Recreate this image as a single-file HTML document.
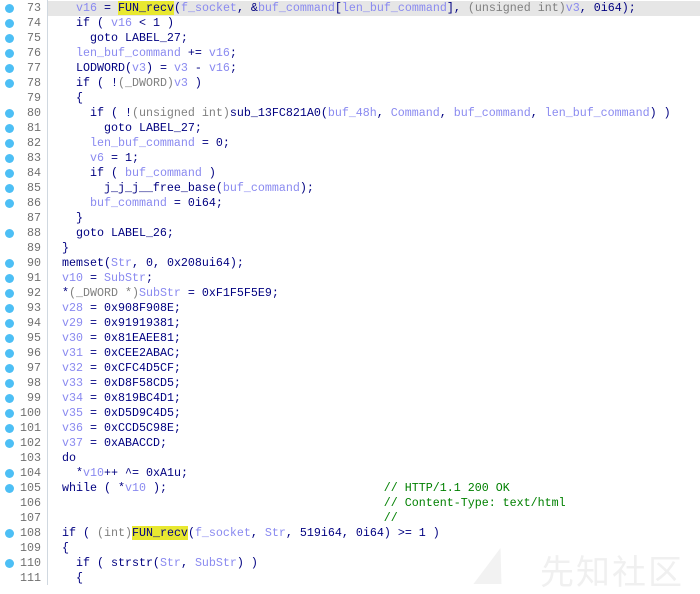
<!DOCTYPE html>
<html><head><meta charset="utf-8"><style>
body{margin:0;width:700px;height:585px;background:#fff;overflow:hidden;position:relative;font-family:"Liberation Mono",monospace;font-size:11.67px;}
.r{position:absolute;left:0;width:700px;height:15px;line-height:15px;white-space:pre;}
.d{position:absolute;left:5px;top:3px;width:9px;height:9px;border-radius:50%;background:#4dbff5;}
.n{position:absolute;left:14px;width:27px;text-align:right;color:#707070;}
.c{position:absolute;left:62px;color:#000080;}
.hl{background:#e6e6e6;}
.v{color:#8a8af0}.g{color:#808080}.k{color:#000080}.cm{color:#008000}
.y{background:#e8e830}
#sep{position:absolute;left:47px;top:0;width:1px;height:585px;background:#d0d8e0;}
#wm{position:absolute;left:540px;top:545px;font-family:"Noto Sans CJK SC",sans-serif;font-size:34px;color:#f0f0f0;letter-spacing:2px;}
#wm2{position:absolute;left:480px;top:548px;width:0;height:0;border-left:14px solid transparent;border-right:14px solid transparent;border-bottom:36px solid #f2f2f2;transform:skewX(-20deg);}
</style></head><body>
<div id="wm2"></div><div id="wm">先知社区</div>
<div id="sep"></div>
<div class="r hl" style="top:1px;left:48px;width:652px"></div>
<div class="r" style="top:1px"><span class="d"></span><span class="n">73</span><span class="c">  <span class="v">v16</span> = <span class="y">FUN_recv</span>(<span class="v">f_socket</span>, &amp;<span class="v">buf_command</span>[<span class="v">len_buf_command</span>], <span class="g">(unsigned int)</span><span class="v">v3</span>, 0i64);</span></div>
<div class="r" style="top:16px"><span class="d"></span><span class="n">74</span><span class="c">  if ( <span class="v">v16</span> &lt; 1 )</span></div>
<div class="r" style="top:31px"><span class="d"></span><span class="n">75</span><span class="c">    goto LABEL_27;</span></div>
<div class="r" style="top:46px"><span class="d"></span><span class="n">76</span><span class="c">  <span class="v">len_buf_command</span> += <span class="v">v16</span>;</span></div>
<div class="r" style="top:61px"><span class="d"></span><span class="n">77</span><span class="c">  LODWORD(<span class="v">v3</span>) = <span class="v">v3</span> - <span class="v">v16</span>;</span></div>
<div class="r" style="top:76px"><span class="d"></span><span class="n">78</span><span class="c">  if ( !<span class="g">(_DWORD)</span><span class="v">v3</span> )</span></div>
<div class="r" style="top:91px"><span class="n">79</span><span class="c">  {</span></div>
<div class="r" style="top:106px"><span class="d"></span><span class="n">80</span><span class="c">    if ( !<span class="g">(unsigned int)</span>sub_13FC821A0(<span class="v">buf_48h</span>, <span class="v">Command</span>, <span class="v">buf_command</span>, <span class="v">len_buf_command</span>) )</span></div>
<div class="r" style="top:121px"><span class="d"></span><span class="n">81</span><span class="c">      goto LABEL_27;</span></div>
<div class="r" style="top:136px"><span class="d"></span><span class="n">82</span><span class="c">    <span class="v">len_buf_command</span> = 0;</span></div>
<div class="r" style="top:151px"><span class="d"></span><span class="n">83</span><span class="c">    <span class="v">v6</span> = 1;</span></div>
<div class="r" style="top:166px"><span class="d"></span><span class="n">84</span><span class="c">    if ( <span class="v">buf_command</span> )</span></div>
<div class="r" style="top:181px"><span class="d"></span><span class="n">85</span><span class="c">      j_j_j__free_base(<span class="v">buf_command</span>);</span></div>
<div class="r" style="top:196px"><span class="d"></span><span class="n">86</span><span class="c">    <span class="v">buf_command</span> = 0i64;</span></div>
<div class="r" style="top:211px"><span class="n">87</span><span class="c">  }</span></div>
<div class="r" style="top:226px"><span class="d"></span><span class="n">88</span><span class="c">  goto LABEL_26;</span></div>
<div class="r" style="top:241px"><span class="n">89</span><span class="c">}</span></div>
<div class="r" style="top:256px"><span class="d"></span><span class="n">90</span><span class="c">memset(<span class="v">Str</span>, 0, 0x208ui64);</span></div>
<div class="r" style="top:271px"><span class="d"></span><span class="n">91</span><span class="c"><span class="v">v10</span> = <span class="v">SubStr</span>;</span></div>
<div class="r" style="top:286px"><span class="d"></span><span class="n">92</span><span class="c">*<span class="g">(_DWORD *)</span><span class="v">SubStr</span> = 0xF1F5F5E9;</span></div>
<div class="r" style="top:301px"><span class="d"></span><span class="n">93</span><span class="c"><span class="v">v28</span> = 0x908F908E;</span></div>
<div class="r" style="top:316px"><span class="d"></span><span class="n">94</span><span class="c"><span class="v">v29</span> = 0x91919381;</span></div>
<div class="r" style="top:331px"><span class="d"></span><span class="n">95</span><span class="c"><span class="v">v30</span> = 0x81EAEE81;</span></div>
<div class="r" style="top:346px"><span class="d"></span><span class="n">96</span><span class="c"><span class="v">v31</span> = 0xCEE2ABAC;</span></div>
<div class="r" style="top:361px"><span class="d"></span><span class="n">97</span><span class="c"><span class="v">v32</span> = 0xCFC4D5CF;</span></div>
<div class="r" style="top:376px"><span class="d"></span><span class="n">98</span><span class="c"><span class="v">v33</span> = 0xD8F58CD5;</span></div>
<div class="r" style="top:391px"><span class="d"></span><span class="n">99</span><span class="c"><span class="v">v34</span> = 0x819BC4D1;</span></div>
<div class="r" style="top:406px"><span class="d"></span><span class="n">100</span><span class="c"><span class="v">v35</span> = 0xD5D9C4D5;</span></div>
<div class="r" style="top:421px"><span class="d"></span><span class="n">101</span><span class="c"><span class="v">v36</span> = 0xCCD5C98E;</span></div>
<div class="r" style="top:436px"><span class="d"></span><span class="n">102</span><span class="c"><span class="v">v37</span> = 0xABACCD;</span></div>
<div class="r" style="top:451px"><span class="n">103</span><span class="c">do</span></div>
<div class="r" style="top:466px"><span class="d"></span><span class="n">104</span><span class="c">  *<span class="v">v10</span>++ ^= 0xA1u;</span></div>
<div class="r" style="top:481px"><span class="d"></span><span class="n">105</span><span class="c">while ( *<span class="v">v10</span> );                               <span class="cm">// HTTP/1.1 200 OK</span></span></div>
<div class="r" style="top:496px"><span class="n">106</span><span class="c">                                              <span class="cm">// Content-Type: text/html</span></span></div>
<div class="r" style="top:511px"><span class="n">107</span><span class="c">                                              <span class="cm">//</span></span></div>
<div class="r" style="top:526px"><span class="d"></span><span class="n">108</span><span class="c">if ( <span class="g">(int)</span><span class="y">FUN_recv</span>(<span class="v">f_socket</span>, <span class="v">Str</span>, 519i64, 0i64) &gt;= 1 )</span></div>
<div class="r" style="top:541px"><span class="n">109</span><span class="c">{</span></div>
<div class="r" style="top:556px"><span class="d"></span><span class="n">110</span><span class="c">  if ( strstr(<span class="v">Str</span>, <span class="v">SubStr</span>) )</span></div>
<div class="r" style="top:571px"><span class="n">111</span><span class="c">  {</span></div>
</body></html>
